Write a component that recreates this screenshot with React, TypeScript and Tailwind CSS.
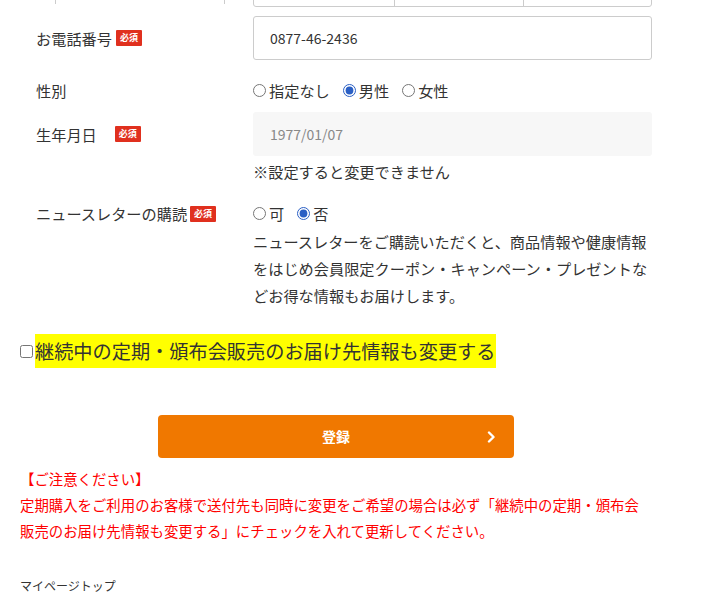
import React from "react";

function Required({ className = "" }: { className?: string }) {
  return (
    <span
      className={`inline-flex h-[16px] w-[26px] items-center justify-center rounded-[1px] bg-[#e0301e] text-[9px] font-bold leading-none text-white ${className}`}
    >
      必須
    </span>
  );
}

function Radio({ name, label, checked = false }: { name: string; label: string; checked?: boolean }) {
  return (
    <label className="mr-[13px] flex items-center gap-[3px]">
      <input
        type="radio"
        name={name}
        defaultChecked={checked}
        className="h-[13px] w-[13px] accent-[#2a5fc4]"
      />
      <span>{label}</span>
    </label>
  );
}

export default function App() {
  return (
    <div className="min-h-[612px] w-[712px] bg-white font-['Noto_Sans_CJK_JP',sans-serif] text-[15.2px] text-[#333]">
      <div className="ml-[20px] w-[632px]">
        {/* tail of the previous row */}
        <div className="flex h-[7px] items-end overflow-hidden">
          <div className="ml-[35px] h-[4px] w-[170px] self-start border-x border-[#ccc]" />
          <div className="ml-auto flex h-[44px] w-[399px] shrink-0 rounded-[3px] border border-[#ccc]">
            <div className="w-[141px] border-r border-[#ccc]" />
            <div className="w-[129px] border-r border-[#ccc]" />
            <div className="flex-1" />
          </div>
        </div>

        {/* phone */}
        <div className="mt-[9px] flex items-center">
          <div className="flex w-[233px] items-center pl-4">
            <span>お電話番号</span>
            <Required className="ml-[4px]" />
          </div>
          <div className="flex h-[44px] w-[399px] items-center rounded-[3px] border border-[#ccc] px-4 text-[14px]">
            0877-46-2436
          </div>
        </div>

        {/* gender */}
        <div className="mt-[19px] flex h-[22px] items-center">
          <div className="w-[233px] pl-4">性別</div>
          <div className="flex items-center">
            <Radio name="sex" label="指定なし" />
            <Radio name="sex" label="男性" checked />
            <Radio name="sex" label="女性" />
          </div>
        </div>

        {/* birthday */}
        <div className="mt-[11px] flex items-center">
          <div className="flex w-[233px] items-center pl-4">
            <span>生年月日</span>
            <Required className="ml-[18px]" />
          </div>
          <div className="flex h-[44px] w-[399px] items-center rounded-[3px] bg-[#f7f7f7] px-[17px] text-[14px] text-[#888]">
            1977/01/07
          </div>
        </div>
        <div className="ml-[233px] mt-[2px] leading-[27px]">※設定すると変更できません</div>

        {/* newsletter */}
        <div className="mt-[15px] flex items-start">
          <div className="flex h-[27px] w-[233px] items-center pl-4">
            <span>ニュースレターの購読</span>
            <Required className="ml-[3px]" />
          </div>
          <div className="w-[399px]">
            <div className="flex h-[27px] items-center">
              <Radio name="news" label="可" />
              <Radio name="news" label="否" checked />
            </div>
            <p className="mt-[1px] leading-[27px]">
              ニュースレターをご購読いただくと、商品情報や健康情報をはじめ会員限定クーポン・キャンペーン・プレゼントなどお得な情報もお届けします。
            </p>
          </div>
        </div>

        {/* subscription checkbox */}
        <label className="mt-[25px] flex items-center">
          <input type="checkbox" className="h-[13px] w-[13px]" />
          <span className="ml-[2px] bg-[#ffff00] text-[19.2px] leading-[34px]">
            継続中の定期・頒布会販売のお届け先情報も変更する
          </span>
        </label>

        {/* submit */}
        <button className="relative ml-[138px] mt-[47px] flex h-[43px] w-[356px] items-center justify-center rounded-[4px] bg-[#f07800] text-[14px] font-bold text-white">
          登録
          <svg
            className="absolute right-[18px] top-1/2 -translate-y-1/2"
            width="9"
            height="12"
            viewBox="0 0 9 12"
            fill="none"
          >
            <path d="M2 1.5 L6.5 6 L2 10.5" stroke="white" strokeWidth="2.4" strokeLinecap="round" strokeLinejoin="round" />
          </svg>
        </button>

        {/* notice */}
        <div className="mt-[8px] text-[14.4px] leading-[1.8] text-[#ff0000]">
          【ご注意ください】
          <br />
          定期購入をご利用のお客様で送付先も同時に変更をご希望の場合は必ず「継続中の定期・頒布会販売のお届け先情報も変更する」にチェックを入れて更新してください。
        </div>

        <div className="mt-[33px] text-[12px] leading-[18px] text-[#333]">マイページトップ</div>
      </div>
    </div>
  );
}
